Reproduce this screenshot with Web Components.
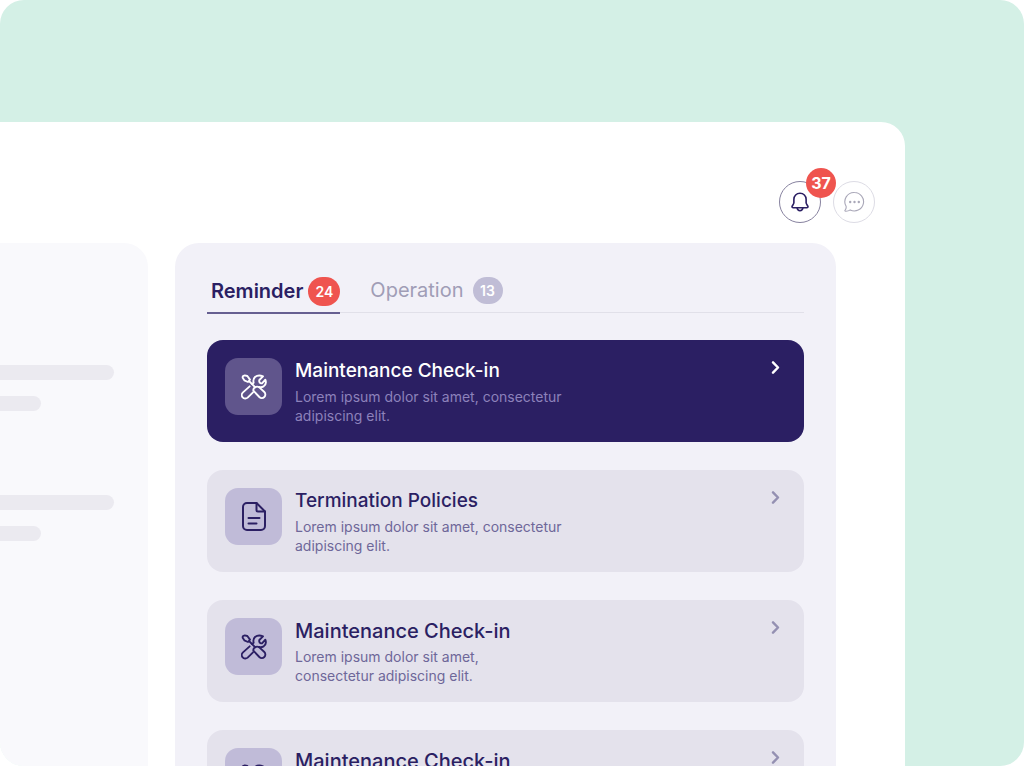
<!DOCTYPE html>
<html lang="en">
<head>
<meta charset="utf-8">
<meta name="viewport" content="width=device-width, initial-scale=1">
<title>Reminders</title>
<style>
  body { margin: 0; background: #fff; font-family: Inter, "Liberation Sans", sans-serif; color: #2b1f63; }
</style>
</head>
<body>
<app-scene>
  <app-window>
    <icon-button slot="actions" icon="bell" label="Notifications" count="37"></icon-button>
    <icon-button slot="actions" icon="chat" label="Messages" muted></icon-button>
    <skeleton-panel></skeleton-panel>
    <reminder-panel>
      <tab-item slot="tabs" count="24" active>Reminder</tab-item>
      <tab-item slot="tabs" count="13">Operation</tab-item>
      <reminder-card icon="tools" active>Maintenance Check-in
        <span slot="text">Lorem ipsum dolor sit amet, consectetur<br>adipiscing elit.</span></reminder-card>
      <reminder-card icon="file">Termination Policies
        <span slot="text">Lorem ipsum dolor sit amet, consectetur<br>adipiscing elit.</span></reminder-card>
      <reminder-card icon="tools" large>Maintenance Check-in
        <span slot="text">Lorem ipsum dolor sit amet,<br>consectetur adipiscing elit.</span></reminder-card>
      <reminder-card icon="tools" large>Maintenance Check-in
        <span slot="text">Lorem ipsum dolor sit amet,<br>consectetur adipiscing elit.</span></reminder-card>
    </reminder-panel>
  </app-window>
</app-scene>

<script>
const ICONS = {
  bell: `<svg width="18" height="20" viewBox="0 0 20 22" fill="none" stroke="currentColor" stroke-width="1.8" stroke-linejoin="round" stroke-linecap="round" aria-hidden="true">
    <path d="M10 1.300c-3.900 0-6.800 2.900-6.800 6.600v4c0 1.500-2.100 3.100-2.100 4.400 0 .8.500 1.100 1.300 1.100h15.200c.8 0 1.300-.3 1.300-1.100 0-1.300-2.100-2.900-2.100-4.400v-4c0-3.700-2.900-6.600-6.800-6.600Z"/>
    <path d="M6.800 17.600c.3 2 1.500 3.100 3.200 3.100s2.900-1.100 3.200-3.100"/></svg>`,
  chat: `<svg width="22" height="22" viewBox="0 0 22 22" fill="none" stroke="currentColor" stroke-width="1.1" stroke-linejoin="round" stroke-linecap="round" aria-hidden="true">
    <path d="M11.500 1.500a9.200 9.200 0 1 1-4.300 17.400c-1.200.9-2.800 1.400-4.700 1.300-.6 0-.8-.6-.4-1 1-1.100 1.300-2.200 1-3.900A9.200 9.200 0 0 1 11.500 1.500Z"/>
    <g fill="currentColor" stroke="none"><circle cx="7.200" cy="11" r="1.200"/><circle cx="11.500" cy="11" r="1.200"/><circle cx="15.800" cy="11" r="1.200"/></g></svg>`,
  tools: `<svg width="26" height="26" viewBox="-1 -1 78 78" fill="none" stroke="currentColor" stroke-width="5.600" stroke-linejoin="round" stroke-linecap="round" aria-hidden="true">
    <path d="M4 10Q3 4 10 3L18 5 26 16 20 23 9 18ZM23 20 42 39"/>
    <path d="M36 49 54 68A10 10 0 0 0 69 53L54 39Q47 35 41 39 35 43 36 49Z"/>
    <path d="M32 29 37 25Q34 15 41 8 51 0 65 6L54 17Q52 25 59 27L62 27 72 16Q77 29 67 36 60 40 54 38"/>
    <path d="M25 36 5 54A10 10 0 0 0 19 70L35 54"/></svg>`,
  file: `<svg width="24" height="29" viewBox="0 0 24 29" fill="none" stroke="currentColor" stroke-width="2" stroke-linejoin="round" stroke-linecap="round" aria-hidden="true">
    <path d="M14.500 1H5A4 4 0 0 0 1 5v19a4 4 0 0 0 4 4h14a4 4 0 0 0 4-4V9.500L14.500 1Z"/>
    <path d="M14.500 1v7a1.500 1.500 0 0 0 1.500 1.500h7M6.500 16h11M6.500 21.500H14.500"/></svg>`,
  chevron: `<svg width="9" height="13" viewBox="0 0 9 13" fill="none" stroke="currentColor" stroke-width="2.400" stroke-linejoin="round" stroke-linecap="round" aria-hidden="true"><path d="m2 1.300 5 5.200-5 5.200"/></svg>`
};

class BaseElement extends HTMLElement {
  connectedCallback() {
    if (!this.shadowRoot) this.attachShadow({ mode: "open" }).innerHTML = this.render();
  }
}

customElements.define("app-scene", class extends BaseElement {
  render() {
    return `<style>
      :host { display: flex; box-sizing: border-box; height: 100vh; padding: 122px 119px 0 0; overflow: hidden;
        border-radius: 24px; background: #d4f0e6; }
      </style><slot></slot>`;
  }
});

customElements.define("app-window", class extends BaseElement {
  render() {
    return `<style>
      :host { display: flex; flex: 1; min-width: 0; flex-direction: column; gap: 20px; background: #fff; border-radius: 0 24px 0 0; }
      header { display: flex; justify-content: flex-end; gap: 12px; padding: 59px 30px 0 0; }
      main { display: grid; flex: 1; min-height: 0; grid-template-columns: minmax(0, 148fr) minmax(0, 661fr); gap: 27px; padding-right: 69px; }
      </style><header><slot name="actions"></slot></header><main><slot></slot></main>`;
  }
});

customElements.define("icon-button", class extends BaseElement {
  render() {
    const count = this.getAttribute("count");
    return `<style>
      :host { display: block; position: relative; }
      button { display: grid; place-items: center; box-sizing: border-box; width: 42px; height: 42px; padding: 0;
        border: 1px solid #87829f; border-radius: 50%; background: none; color: #2b1f63; cursor: pointer; }
      :host([muted]) button { border-color: #dddce5; color: #a9a7b8; }
      .count { position: absolute; top: -13px; right: -15px; width: 30px; border-radius: 50%;
        background: #ef544f; color: #fff; font-size: 16px; font-weight: 700; line-height: 30px; text-align: center; pointer-events: none; }
      </style><button type="button" aria-label="${this.getAttribute("label")}">${ICONS[this.getAttribute("icon")]}</button>
      ${count ? `<span class="count">${count}</span>` : ""}`;
  }
});

customElements.define("skeleton-panel", class extends BaseElement {
  render() {
    return `<style>
      :host { display: block; padding: 122px 34px 0 0; background: #f9f9fc; border-radius: 0 24px 0 0; }
      div { display: grid; gap: 16px; margin-bottom: 84px; }
      i { height: 15px; background: #ebeaf0; border-radius: 0 8px 8px 0; }
      i + i { width: 36%; }
      </style><div><i></i><i></i></div><div><i></i><i></i></div>`;
  }
});

customElements.define("reminder-panel", class extends BaseElement {
  render() {
    return `<style>
      :host { display: block; min-width: 0; padding: 28px 32px 0; overflow: hidden; background: #f2f1f8; border-radius: 24px 24px 0 0; }
      nav { display: flex; gap: 26px; height: 41px; border-bottom: 1px solid #e1e0e9; }
      section { display: grid; gap: 28px; padding-top: 27px; }
      </style><nav role="tablist"><slot name="tabs"></slot></nav><section><slot></slot></section>`;
  }
});

customElements.define("tab-item", class extends BaseElement {
  render() {
    const active = this.hasAttribute("active");
    return `<style>
      :host { display: block; }
      button { display: flex; align-items: center; gap: 9px; box-sizing: border-box; height: 43px; padding: 0 0 5px 4px; border: 0;
        background: none; color: #a09db6; font: 400 20px/28px Inter, "Liberation Sans", sans-serif; cursor: pointer; }
      .count { width: 30px; border-radius: 14px; background: #c0bdd6; color: #fff; font-size: 14px; font-weight: 600; line-height: 27px; text-align: center; }
      :host([active]) button { gap: 5px; padding-bottom: 1px; border-bottom: 2px solid #665f91; color: #2b1f63; font-weight: 600; }
      :host([active]) .count { width: 32px; background: #ef544f; line-height: 29px; border-radius: 15px; }
      </style><button type="button" role="tab" aria-selected="${active}"><span><slot></slot></span><span class="count">${this.getAttribute("count")}</span></button>`;
  }
});

customElements.define("reminder-card", class extends BaseElement {
  render() {
    return `<style>
      :host { display: block; }
      a { display: flex; gap: 13px; box-sizing: border-box; padding: 18px 24px 17px 18px; border-radius: 16px;
        background: #e4e2ec; color: #2b1f63; text-decoration: none; }
      .tile { display: grid; flex: none; place-items: center; width: 57px; height: 57px; border-radius: 13px; background: #c0bbd8; }
      .body { flex: 1; min-width: 0; }
      h2 { margin: 0 0 3px; font-size: 19px; font-weight: 500; line-height: 26px; }
      :host([large]) h2 { font-size: 20px; }
      p { margin: 0; color: #6e6799; font-size: 14px; font-weight: 400; line-height: 19px; }
      .arrow { display: flex; align-items: flex-start; padding-top: 3px; color: #9490b2; }
      :host([active]) a { background: #2b1f63; color: #fff; }
      :host([active]) .tile { background: #60558c; }
      :host([active]) p { color: #8d82bb; }
      :host([active]) .arrow { color: #fff; }
      </style><a href="#"><span class="tile">${ICONS[this.getAttribute("icon")]}</span>
      <div class="body"><h2><slot></slot></h2><p><slot name="text"></slot></p></div>
      <span class="arrow">${ICONS.chevron}</span></a>`;
  }
});
</script>
</body>
</html>
